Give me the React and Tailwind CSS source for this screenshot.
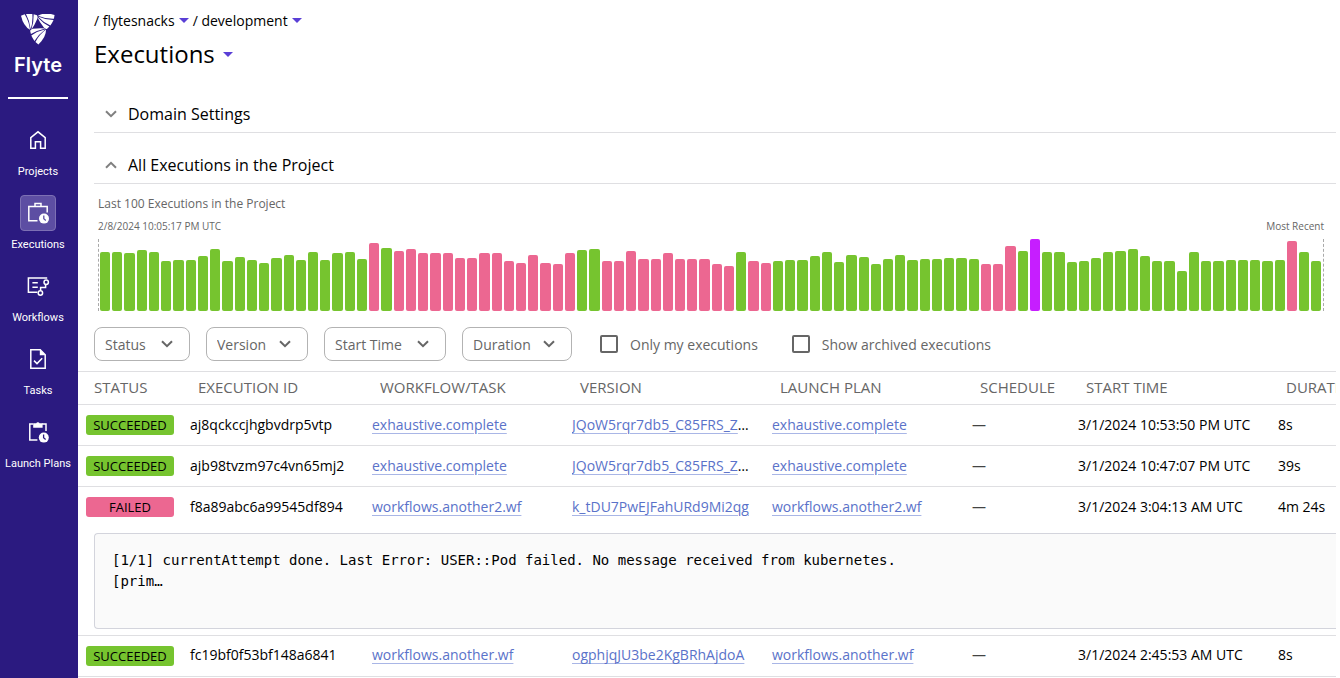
import { useState } from "react";

const GREEN = "bg-[#76c42f]";
const PINK = "bg-[#ec6791]";
const PURPLE = "bg-[#c61eff]";

// consecutive runs of bars that share a phase, heights in px
const runs = [
  { color: GREEN, heights: [59, 59, 58, 61, 59, 50, 51, 51, 55, 62, 50, 54, 51, 48, 53, 56, 51, 59, 51, 58, 59, 52] },
  { color: PINK, heights: [68] },
  { color: GREEN, heights: [63] },
  { color: PINK, heights: [60, 62, 58, 58, 58, 53, 53, 58, 58, 50, 48, 56, 48, 47, 58] },
  { color: GREEN, heights: [61, 62] },
  { color: PINK, heights: [50, 50, 60, 52, 52, 58, 52, 52, 52, 47, 45] },
  { color: GREEN, heights: [59] },
  { color: PINK, heights: [50, 48] },
  { color: GREEN, heights: [50, 51, 51, 55, 59, 49, 56, 54, 47, 52, 56, 51, 52, 52, 53, 53, 52] },
  { color: PINK, heights: [47, 47, 65] },
  { color: GREEN, heights: [60] },
  { color: PURPLE, heights: [72] },
  { color: GREEN, heights: [59, 59, 49, 50, 53, 59, 60, 62, 55, 50, 50, 40, 59, 50, 50, 51, 51, 51, 50, 51] },
  { color: PINK, heights: [70] },
  { color: GREEN, heights: [59, 50] },
];

const bars = runs.flatMap((run) => run.heights.map((height) => ({ color: run.color, height })));

const executions = [
  {
    id: "aj8qckccjhgbvdrp5vtp",
    status: "SUCCEEDED",
    workflow: "exhaustive.complete",
    version: "JQoW5rqr7db5_C85FRS_ZWQA",
    start: "3/1/2024 10:53:50 PM UTC",
    duration: "8s",
  },
  {
    id: "ajb98tvzm97c4vn65mj2",
    status: "SUCCEEDED",
    workflow: "exhaustive.complete",
    version: "JQoW5rqr7db5_C85FRS_ZWQA",
    start: "3/1/2024 10:47:07 PM UTC",
    duration: "39s",
  },
  {
    id: "f8a89abc6a99545df894",
    status: "FAILED",
    workflow: "workflows.another2.wf",
    version: "k_tDU7PwEJFahURd9Mi2qg",
    start: "3/1/2024 3:04:13 AM UTC",
    duration: "4m 24s",
    error:
      "[1/1] currentAttempt done. Last Error: USER::Pod failed. No message received from kubernetes.\n[prim…",
  },
  {
    id: "fc19bf0f53bf148a6841",
    status: "SUCCEEDED",
    workflow: "workflows.another.wf",
    version: "ogphjqJU3be2KgBRhAjdoA",
    start: "3/1/2024 2:45:53 AM UTC",
    duration: "8s",
  },
];

function LogoBlades() {
  return (
    <>
      <path d="M0 5 L11 1 Q24 22 27 47 Q7 36 0 5Z" />
      <path d="M15 0 Q24 -1 34 0 Q36 24 29 46 Q26 20 15 0Z" />
      <path d="M38 1 L48 4 Q51 8 49 14 Q41 33 31 47 Q39 22 38 1Z" />
    </>
  );
}

function FlyteLogo() {
  return (
    <svg viewBox="0 0 102 96" className="h-8 w-[34px] fill-white" aria-hidden="true">
      <g>
        <LogoBlades />
      </g>
      <g transform="rotate(120 51 33)">
        <LogoBlades />
      </g>
      <g transform="rotate(240 51 33)">
        <LogoBlades />
      </g>
    </svg>
  );
}

function NavSvg({ children }) {
  return (
    <svg viewBox="0 0 24 24" className="size-6" fill="none" stroke="white" strokeWidth="1.5" aria-hidden="true">
      {children}
    </svg>
  );
}

const navItems = [
  {
    label: "Projects",
    icon: (
      <NavSvg>
        <path d="M4.8 20.2V9.6L12 3.8l7.2 5.8v10.6h-4.6v-6.4H9.4v6.4z" />
      </NavSvg>
    ),
  },
  {
    label: "Executions",
    icon: (
      <NavSvg>
        <path d="M11.5 19.8H2.8V5.6h18.4v6" />
        <path d="M9 5.4V2.6h6v2.8" />
        <circle cx="18" cy="17.6" r="5" fill="white" stroke="none" />
        <path d="M17.8 14.6v3.2l2 1.6" stroke="#5d4ea3" strokeWidth="1.3" />
      </NavSvg>
    ),
  },
  {
    label: "Workflows",
    icon: (
      <NavSvg>
        <path d="M21.2 4H2.4v14.2h9" />
        <path d="M6.4 8.8h5.4M6.4 13.2h5.4" />
        <path d="M19.6 10.4v3.2h-5v3" />
        <circle cx="20.2" cy="8.2" r="2.2" />
        <circle cx="14.4" cy="19" r="2.2" />
      </NavSvg>
    ),
  },
  {
    label: "Tasks",
    icon: (
      <NavSvg>
        <path d="M4.8 2.8h9.4l5 5v13.4H4.8z" />
        <path d="M13.8 2.4v5.8h5.8z" fill="white" stroke="none" />
        <path d="M8 13.6l3 3 5.2-5.4" />
      </NavSvg>
    ),
  },
  {
    label: "Launch Plans",
    icon: (
      <NavSvg>
        <path d="M11.4 20H3.8V4h3.4M16 4h4v7" />
        <path d="M7.2 3.2h3a1.9 1.9 0 0 1 3.4 0h3v4.6H7.2z" fill="white" stroke="none" />
        <circle cx="17.8" cy="17.6" r="5" fill="white" stroke="none" />
        <path d="M17.6 14.6v3.2l2 1.6" stroke="#2b1a80" strokeWidth="1.3" />
      </NavSvg>
    ),
  },
];

function Sidebar() {
  return (
    <aside className="flex w-[78px] shrink-0 flex-col items-center bg-[#2b1a80] pt-3.5 pr-[2px] text-white">
      <a href="#home" className="flex flex-col items-center">
        <FlyteLogo />
        <span className="mt-1 font-['Inter'] text-[20px] leading-[30px] font-semibold">Flyte</span>
      </a>
      <hr className="mt-[17px] w-[60px] border-t-2 border-white" />
      <nav className="mt-[23px] flex flex-col gap-3">
        {navItems.map((item) => (
          <a key={item.label} href="#nav" className="flex flex-col items-center">
            <span
              className={`flex size-9 items-center justify-center rounded border ${
                item.label === "Executions" ? "border-[#7d70b4] bg-[#5d4ea3]" : "border-transparent"
              }`}
            >
              {item.icon}
            </span>
            <span className="mt-0.5 font-['Roboto'] text-[11px] leading-[23px] whitespace-nowrap">{item.label}</span>
          </a>
        ))}
      </nav>
    </aside>
  );
}

function Caret() {
  return (
    <svg viewBox="0 0 10 5" className="h-[5px] w-2.5 fill-[#5a3fd6]" aria-hidden="true">
      <path d="M0 0h10L5 5z" />
    </svg>
  );
}

function Chevron({ className, up }) {
  return (
    <svg viewBox="0 0 12 8" className={className} fill="none" stroke="currentColor" strokeWidth="2" aria-hidden="true">
      <path d={up ? "M1 6.8L6 1.8l5 5" : "M1 1.2l5 5 5-5"} />
    </svg>
  );
}

function SectionHeader({ title, open, onToggle }) {
  return (
    <h2 className="border-b border-[#dfdfe2]">
      <button
        type="button"
        aria-expanded={open}
        onClick={onToggle}
        className="flex h-[34px] w-full items-center gap-[11px] pb-0.5 pl-[11px] text-left text-[16px] font-medium"
      >
        <Chevron up={open} className="h-2 w-3 text-[#808080]" />
        {title}
      </button>
    </h2>
  );
}

function FilterSelect({ label, width }) {
  return (
    <div className={`relative ${width}`}>
      <select
        aria-label={label}
        className="h-[34px] w-full appearance-none rounded-lg border border-[#b3b3b3] bg-white pl-2.5 text-[14px] text-[#666]"
      >
        <option>{label}</option>
      </select>
      <Chevron className="pointer-events-none absolute top-[13px] right-[17px] h-2 w-3 text-[#666]" />
    </div>
  );
}

function FilterCheckbox({ label }) {
  return (
    <label className="flex items-center gap-3 text-[14px] text-[#666]">
      <input type="checkbox" className="size-[18px] appearance-none rounded-[2px] border-2 border-[#666] checked:bg-[#666]" />
      {label}
    </label>
  );
}

function StatusBadge({ status }) {
  return (
    <span
      className={`block h-5 w-[88px] rounded-[3px] text-center text-[13px] leading-5 ${
        status === "FAILED" ? PINK : GREEN
      }`}
    >
      {status}
    </span>
  );
}

function TextLink({ children }) {
  return (
    <a href="#details" className="text-[#5a72c9] underline decoration-[#a9b6e6] underline-offset-[3px]">
      {children}
    </a>
  );
}

function ExecutionRows({ execution }) {
  const border = execution.error ? "" : "border-b border-[#dfdfe2]";
  return (
    <>
      <tr className={`h-[41px] [&>td:not(:first-child)]:pb-0.5 ${border}`}>
        <td className="pl-2">
          <StatusBadge status={execution.status} />
        </td>
        <td>{execution.id}</td>
        <td>
          <TextLink>{execution.workflow}</TextLink>
        </td>
        <td>
          <div className="w-[184px] truncate">
            <TextLink>{execution.version}</TextLink>
          </div>
        </td>
        <td>
          <TextLink>{execution.workflow}</TextLink>
        </td>
        <td className="text-[#444]">—</td>
        <td>{execution.start}</td>
        <td>{execution.duration}</td>
      </tr>
      {execution.error && (
        <tr className="border-b border-[#dfdfe2]">
          <td colSpan={8} className="pt-[5px] pb-1.5 pl-4">
            <pre className="h-24 rounded-l border border-r-0 border-[#d3d4dc] bg-[#fafafa] px-[17px] py-4 font-['DejaVu_Sans_Mono'] text-[14px] leading-[21px]">
              {execution.error}
            </pre>
          </td>
        </tr>
      )}
    </>
  );
}

export default function App() {
  const [showSettings, setShowSettings] = useState(false);
  const [showExecutions, setShowExecutions] = useState(true);

  return (
    <div className="flex h-screen overflow-hidden bg-white font-['Open_Sans',sans-serif] text-black">
      <Sidebar />
      <main className="mr-1 min-w-0 flex-1 overflow-hidden">
        <header className="pt-2.5 pl-4">
          <nav className="flex h-5 items-center gap-1 text-[14px]">
            <span>/ flytesnacks</span>
            <button type="button" aria-label="Switch project">
              <Caret />
            </button>
            <span>/ development</span>
            <button type="button" aria-label="Switch domain">
              <Caret />
            </button>
          </nav>
          <h1 className="mt-[7px] flex items-center gap-2 text-[24px] leading-[34px] font-medium">
            Executions
            <button type="button" aria-label="Switch section">
              <Caret />
            </button>
          </h1>
        </header>

        <section className="mt-[27px] pl-4">
          <SectionHeader title="Domain Settings" open={showSettings} onToggle={() => setShowSettings(!showSettings)} />
        </section>

        <section className="mt-4 pl-4">
          <SectionHeader
            title="All Executions in the Project"
            open={showExecutions}
            onToggle={() => setShowExecutions(!showExecutions)}
          />
        </section>

        {showExecutions && (
          <>
            {/* Chart */}
            <section className="mt-2.5 pr-3 pl-5 text-[#666]">
              <h3 className="text-[12px] leading-5">Last 100 Executions in the Project</h3>
              <div className="mt-[3px] flex justify-between text-[10px] leading-[18px]">
                <span>2/8/2024 10:05:17 PM UTC</span>
                <span>Most Recent</span>
              </div>
              <div className="mt-1 flex h-[72px] items-end gap-0.5 border-x border-dashed border-[#aaa] px-px">
                {bars.map((bar, i) => (
                  <div key={i} className={`flex-1 rounded-[2px] ${bar.color}`} style={{ height: bar.height }} />
                ))}
              </div>
            </section>

            {/* Filters */}
            <form className="mt-4 flex items-center gap-4 pl-4">
              <FilterSelect label="Status" width="w-24" />
              <FilterSelect label="Version" width="w-[102px]" />
              <FilterSelect label="Start Time" width="w-[122px]" />
              <FilterSelect label="Duration" width="w-[110px]" />
              <div className="ml-3 flex gap-[34px]">
                <FilterCheckbox label="Only my executions" />
                <FilterCheckbox label="Show archived executions" />
              </div>
            </form>

            {/* Executions table */}
            <table className="mt-2.5 w-full table-fixed border-t border-[#dfdfe2] text-left text-[14px] whitespace-nowrap">
              <thead>
                <tr className="h-[33px] border-b border-[#dfdfe2] text-[15px] text-[#666] [&>th]:pb-0.5 [&>th]:pl-2 [&>th]:font-normal">
                  <th className="w-28">
                    <span className="pl-2">STATUS</span>
                  </th>
                  <th className="w-[182px]">EXECUTION ID</th>
                  <th className="w-[200px]">WORKFLOW/TASK</th>
                  <th className="w-[200px]">VERSION</th>
                  <th className="w-[200px]">LAUNCH PLAN</th>
                  <th className="w-[106px]">SCHEDULE</th>
                  <th className="w-[200px]">START TIME</th>
                  <th>DURATION</th>
                </tr>
              </thead>
              <tbody>
                {executions.map((execution) => (
                  <ExecutionRows key={execution.id} execution={execution} />
                ))}
              </tbody>
            </table>
          </>
        )}
      </main>
    </div>
  );
}
